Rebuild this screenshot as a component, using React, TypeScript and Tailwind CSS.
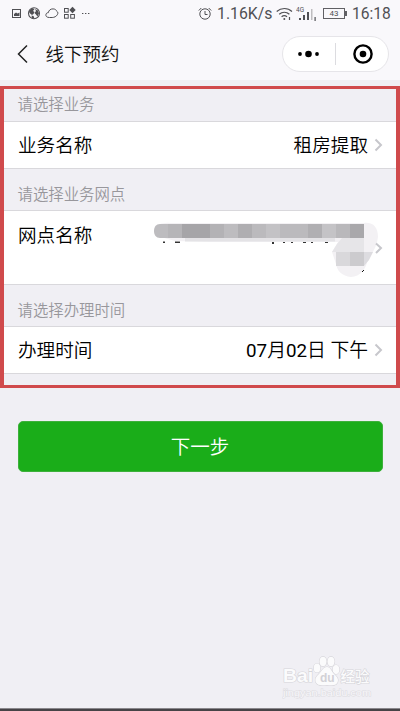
import type { ReactNode } from "react";

function StatusBar() {
  return (
    <div className="flex h-[27px] items-center justify-between pr-[10px] pl-[12px] font-['Roboto',sans-serif] font-normal text-[#505054]">
      <svg className="h-[27px] w-[80px]" viewBox="0 0 80 27" fill="none" stroke="currentColor">
        <rect x="0.500" y="9.500" width="8" height="8" />
        <path d="M2 16v-2l2-1.500 1.500 1 2-1V16z" fill="currentColor" stroke="none" />
        <circle cx="22" cy="13.300" r="5.500" strokeWidth="1.100" />
        <path d="M17 11l3-3 2.500 1-1.500 2 1.500 1-1 2-1.500 1-2.500-2zM23 9l3 1.500 1 3-1.500 3-1.500-2-1.500-1.500 1.500-2zM19.500 15.500l2 .5 1 2.500-2.500-.5z" fill="currentColor" stroke="none" />
        <path d="M37.500 17.500c-3 0-4-1.500-3.500-3.200s1.800-1.600 2.300-1.600c.4-2.400 2.200-3.900 4.800-3.800 2.200.1 3.200 1.100 3.700 2.500 1.300.6 1.300 2 .6 3.200-1 1.900-3.200 2.900-5.200 2.900z" />
        <rect x="52.500" y="8.500" width="3.700" height="3.700" />
        <rect x="52.500" y="14.500" width="3.700" height="3.700" />
        <rect x="58.700" y="14.500" width="3.700" height="3.700" />
        <path d="M60.500 6.800l3.200 3.200-3.200 3.200-3.200-3.200z" fill="currentColor" stroke="none" />
        <path d="M70 13.500h1.400M73 13.500h1.400M76 13.500h1.400" />
      </svg>
      <div className="flex items-center">
        <svg className="mr-[5px] h-[16px] w-[14px]" viewBox="0 0 14 16" fill="none" stroke="currentColor">
          <circle cx="7" cy="8" r="5.200" />
          <path d="M7 5v3.500h2.500M.8 4.500l2.500-2.500M13.200 4.500l-2.500-2.500" />
        </svg>
        <span className="w-[55px] pt-[1px] text-[15.800px] leading-none whitespace-nowrap">1.16K/s</span>
        <svg className="ml-[4px] h-[16px] w-[17px]" viewBox="0 0 17 16" fill="none" stroke="currentColor" strokeWidth="1.200">
          <path d="M.7 5.500c4.500-4 11-4 15.300 0M3.200 8.300c3-2.700 7.200-2.700 10.200 0M5.600 10.800c1.700-1.400 3.700-1.400 5.400 0" />
          <circle cx="8.300" cy="13" r="1" fill="currentColor" stroke="none" />
          <path d="M13.500 11v3" />
        </svg>
        <svg className="ml-[3px] h-[16px] w-[22px]" viewBox="0 0 22 16" fill="currentColor">
          <text x="0" y="5.800" fontSize="6.500">4G</text>
          <path d="M3 12h2v2H3zM7 9h2v5H7zM11 6h2v8h-2zM18.500 11h1.200v4h-1.200z" />
          <path d="M15 3h1.500v11H15z" opacity=".35" />
        </svg>
        <div className="ml-[5px] flex h-[11px] w-[22px] items-center justify-center border border-[#606064] text-[8px] leading-none">
          43
        </div>
        <div className="mr-[5px] h-[5px] w-[2px] bg-[#606064]" />
        <span className="w-[38px] pt-[2px] text-[15.600px] leading-none">16:18</span>
      </div>
    </div>
  );
}

function NavBar() {
  return (
    <header className="flex h-[53px] items-center justify-between pr-[11px] pl-[15.500px]">
      <div className="flex items-center">
        <svg className="h-[20px] w-[13px]" viewBox="0 0 13 20" fill="none" stroke="#222" strokeWidth="1.500">
          <path d="M11 1.500L2.500 10l8.500 8.500" />
        </svg>
        <h1 className="ml-[17px] pt-[2px] text-[18.500px] leading-[26px] text-[#111]">线下预约</h1>
      </div>
      <div className="flex h-[36px] w-[107px] items-center rounded-full border border-[#e6e5e9] bg-white">
        <svg className="h-[20px] w-[52px]" viewBox="0 0 52 20">
          <circle cx="17" cy="10" r="1.900" />
          <circle cx="25.500" cy="10" r="3.300" />
          <circle cx="34" cy="10" r="1.900" />
        </svg>
        <div className="h-[22px] w-px bg-[#dcdce0]" />
        <svg className="h-[22px] w-[52px]" viewBox="0 0 52 22">
          <circle cx="27" cy="11" r="8.600" fill="none" stroke="#000" strokeWidth="2.400" />
          <circle cx="27" cy="11" r="3.300" />
        </svg>
      </div>
    </header>
  );
}

function Chevron() {
  return (
    <svg className="ml-[6px] h-[14px] w-[9px]" viewBox="0 0 9 14" fill="none" stroke="#c7c7cc" strokeWidth="2">
      <path d="M1.500 1.500L7 7l-5.500 5.500" />
    </svg>
  );
}

function SectionLabel({ children }: { children: ReactNode }) {
  return (
    <div className="flex h-[41px] items-center pt-[12px] pl-[13.500px] text-[15.400px] leading-none text-[#98979c]">
      {children}
    </div>
  );
}

function Cell({ label, value }: { label: string; value: ReactNode }) {
  return (
    <div className="flex h-[48px] items-center justify-between border-y border-[#d9d8dc] bg-white pr-[13px] pl-[14px] text-[18.600px] leading-none text-black">
      <span className="pt-[3px]">{label}</span>
      <div className="flex items-center">
        <span className="pt-[3px]">{value}</span>
        <Chevron />
      </div>
    </div>
  );
}

const mosaic = ["#bdbcbf", "#b6b5b8", "#a6a5a8", "#a6a5a8", "#b3b2b5", "#bdbcbf", "#afaeb1", "#bbbabd", "#c3c2c5", "#bbbabd", "#bbbabd", "#b0afb2", "#c4c3c6", "#b9b8bb", "#a9a8ab"];

function BranchCell() {
  return (
    <div className="flex h-[75px] items-start justify-between border-y border-[#d9d8dc] bg-white pl-[14px] text-[18.600px] leading-none text-black">
      <span className="pt-[16px]">网点名称</span>
      <svg className="h-[73px] w-[246px]" viewBox="150 211 246 73">
        <path d="M163 241.500h2v1.500h-2zM175 241.500h5v1.500h-5zM272 241h2v3h-2zM283 241.500h2v1.500h-2zM291 241.500h2v1.500h-2zM303 241.500h3v1.500h-3zM311 241.500h2v1.500h-2zM325 241.500h3v1.500h-3z" fill="#333" />
        <path d="M155 226q8-4 16-3h193c9-1 14 4 14 14-1 8-4 15-10 21-1 10-8 19-17 19-9-1-14-6-15-13l-4-12 6-10H210l-35-1-18-5z" fill="#f3f1f4" />
        <path d="M185 238h150v3.500H185z" fill="#e4e3e6" />
        <path d="M376 243.500l5 4.500-5 5" fill="none" stroke="#c7c7cc" strokeWidth="2" />
        <path d="M362 272l2-2" stroke="#111" />
        <clipPath id="smear">
          <path d="M160 224h204v14H160c-4 0-6-3-6-7s2-7 6-7z" />
        </clipPath>
        <g clipPath="url(#smear)" shapeRendering="crispEdges">
          {mosaic.map((color, i) => (
            <rect key={i} x={154 + i * 14} y="224" width="14" height="14" fill={color} />
          ))}
        </g>
        <path d="M342 238h22v14h-32l5-8z" fill="#e6e5e8" />
        <path d="M336 252h14v14h-14z" fill="#d9d8db" />
        <path d="M350 252h14v14h-14z" fill="#cccbce" />
        <path d="M364 252h9l-4 8-5 6z" fill="#dddce0" />
      </svg>
    </div>
  );
}

function Watermark() {
  return (
    <svg className="h-[46px] w-[96px]" viewBox="0 0 96 46" fill="#fbfbfc" stroke="#d6d5da" strokeWidth="1.200" paintOrder="stroke">
      <text x="1" y="28" fontSize="18.500" fontWeight="700" fontFamily="Liberation Sans, sans-serif" textLength="30" lengthAdjust="spacingAndGlyphs">Bai</text>
      <ellipse cx="35" cy="14" rx="3.300" ry="4.500" />
      <ellipse cx="41" cy="7.500" rx="3.500" ry="4.800" />
      <ellipse cx="49" cy="7.500" rx="3.500" ry="4.800" />
      <ellipse cx="54" cy="15.500" rx="3.300" ry="4.500" />
      <path d="M45 13c-4 0-5 4-8 7s-4.500 5-3 8.500c1.500 3 5 3 11 2.500 6 .5 9 .5 10.500-2.500 1.500-3.500-.5-5.500-3.500-8.500s-3-7-7-7z" />
      <text x="38" y="27.500" fontSize="12" fontWeight="700" fontFamily="Liberation Sans, sans-serif" fill="#d2d1d6" stroke="none">du</text>
      <text x="58.500" y="27.500" fontSize="14.500" fontWeight="500">经验</text>
      <text x="1" y="42" fontSize="9" fontFamily="Liberation Sans, sans-serif" fill="#f8f7fa" stroke="#dddce1" strokeWidth="1" textLength="88" lengthAdjust="spacingAndGlyphs">jingyan.baidu.com</text>
    </svg>
  );
}

export default function App() {
  return (
    <div className="flex h-[711px] w-[400px] flex-col overflow-hidden bg-[#f0eff4] font-['Roboto','Noto_Sans_CJK_SC',sans-serif] font-[350]">
      <div className="bg-[#f9f8fb]">
        <StatusBar />
        <NavBar />
      </div>

      <main className="mt-[6px] h-[302px] border-x-4 border-y-3 border-[#d04a4c]">
        <div className="flex h-[32px] items-center pt-[1px] pl-[13.500px] text-[15.400px] leading-none text-[#98979c]">
          请选择业务
        </div>
        <Cell label="业务名称" value="租房提取" />
        <SectionLabel>请选择业务网点</SectionLabel>
        <BranchCell />
        <SectionLabel>请选择办理时间</SectionLabel>
        <Cell
          label="办理时间"
          value={
            <span className="text-[18.800px]">
              <span className="font-normal">07</span>月<span className="font-normal">02</span>日 下午
            </span>
          }
        />
      </main>

      <button className="mx-[17.500px] mt-[33px] h-[51px] shrink-0 rounded-[5px] border border-[#3db03b] bg-[#1aad19] pt-[2px] text-[19.500px] leading-none text-white">
        下一步
      </button>

      <footer className="mt-auto">
        <div className="flex justify-end pr-[22px] pb-[8px]">
          <Watermark />
        </div>
        <div className="h-[3px] border-t border-[#8a888c] bg-[#464346]" />
      </footer>
    </div>
  );
}
